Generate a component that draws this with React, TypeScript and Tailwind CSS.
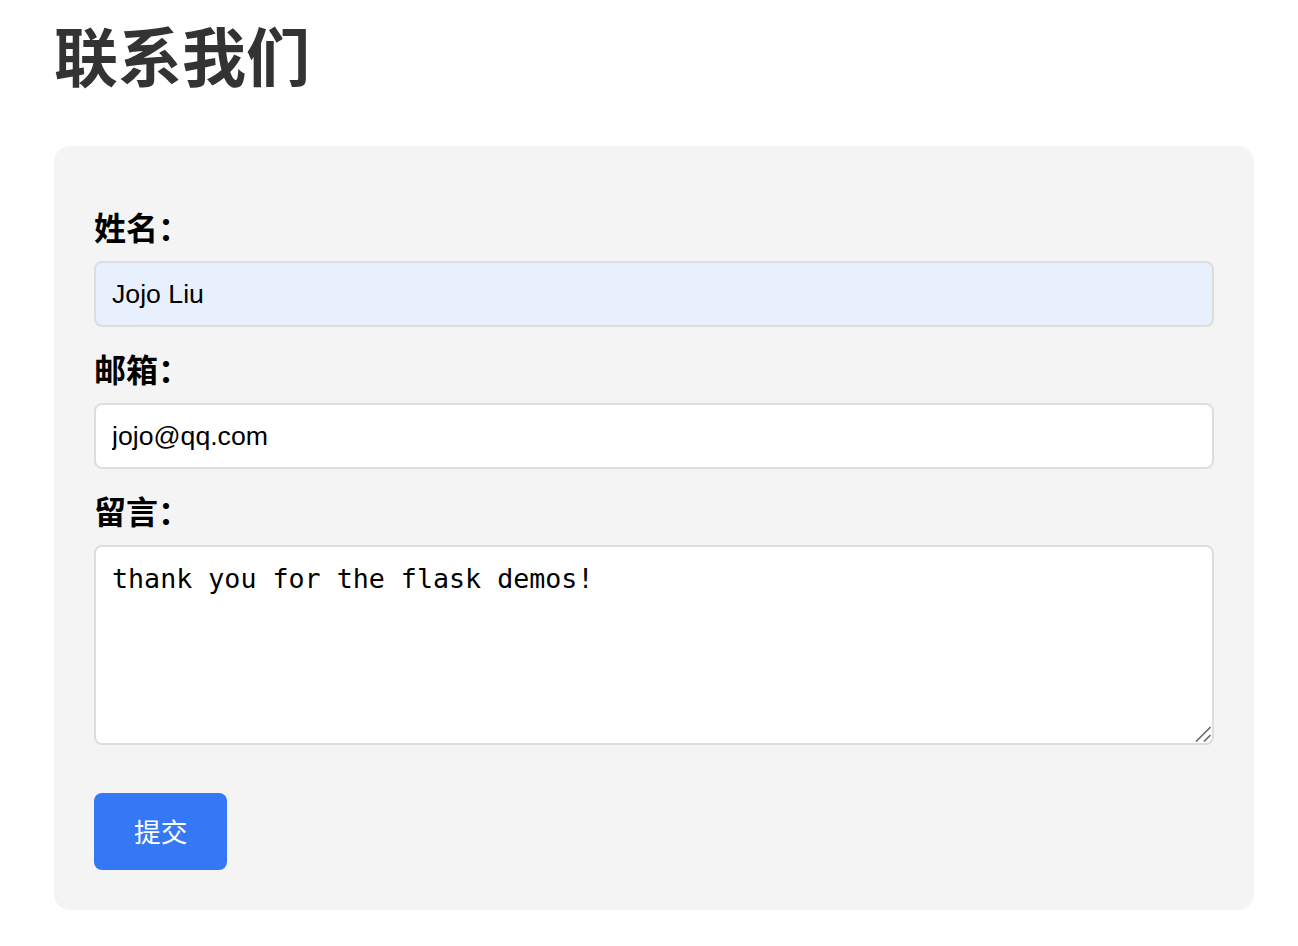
import React from "react";

export default function App() {
  const cjk = { fontFamily: '"Noto Sans CJK SC", "Noto Sans", sans-serif' };
  return (
    <div className="min-h-[946px] bg-white pl-[54px] pt-[15px]" style={cjk}>
      <h1 className="m-0 text-[64px] font-bold leading-[77px] text-[#333333] mb-[54px]">
        联系我们
      </h1>
      <div className="w-[1200px] rounded-[16px] bg-[#f4f4f4] px-[40px] pt-[39px] pb-[40px]">
        <form className="flex flex-col" onSubmit={(e) => e.preventDefault()}>
          <label className="mt-[18px] mb-[12px] block text-[32px] font-bold leading-[46px] text-black">
            姓名：
          </label>
          <input
            type="text"
            defaultValue="Jojo Liu"
            className="h-[66px] w-full rounded-[8px] border-2 border-[#dddddd] bg-[#e8f0fe] px-[16px] text-[26.67px] text-black outline-none"
            style={{ fontFamily: '"Liberation Sans", Arial, sans-serif' }}
          />
          <label className="mt-[18px] mb-[12px] block text-[32px] font-bold leading-[46px] text-black">
            邮箱：
          </label>
          <input
            type="email"
            defaultValue="jojo@qq.com"
            className="h-[66px] w-full rounded-[8px] border-2 border-[#dddddd] bg-white px-[16px] text-[26.67px] text-black outline-none"
            style={{ fontFamily: '"Liberation Sans", Arial, sans-serif' }}
          />
          <label className="mt-[18px] mb-[12px] block text-[32px] font-bold leading-[46px] text-black">
            留言：
          </label>
          <div className="relative">
            <textarea
              defaultValue="thank you for the flask demos!"
              className="block h-[200px] w-full resize-none rounded-[8px] border-2 border-[#dddddd] bg-white p-[16px] text-[26.67px] leading-[31px] text-black outline-none"
              style={{ fontFamily: '"DejaVu Sans Mono", monospace' }}
            />
            <svg
              className="pointer-events-none absolute bottom-[3px] right-[3px]"
              width="16"
              height="16"
              viewBox="0 0 16 16"
            >
              <line x1="1" y1="15.5" x2="15.5" y2="1" stroke="#6b6b6b" strokeWidth="1.6" />
              <line x1="9" y1="15.5" x2="15.5" y2="9" stroke="#6b6b6b" strokeWidth="1.6" />
            </svg>
          </div>
          <div className="mt-[48px]">
            <button
              type="submit"
              className="h-[77px] rounded-[8px] bg-[#3478f6] px-[40px] text-[26.67px] leading-none text-white"
              style={cjk}
            >
              提交
            </button>
          </div>
        </form>
      </div>
    </div>
  );
}
